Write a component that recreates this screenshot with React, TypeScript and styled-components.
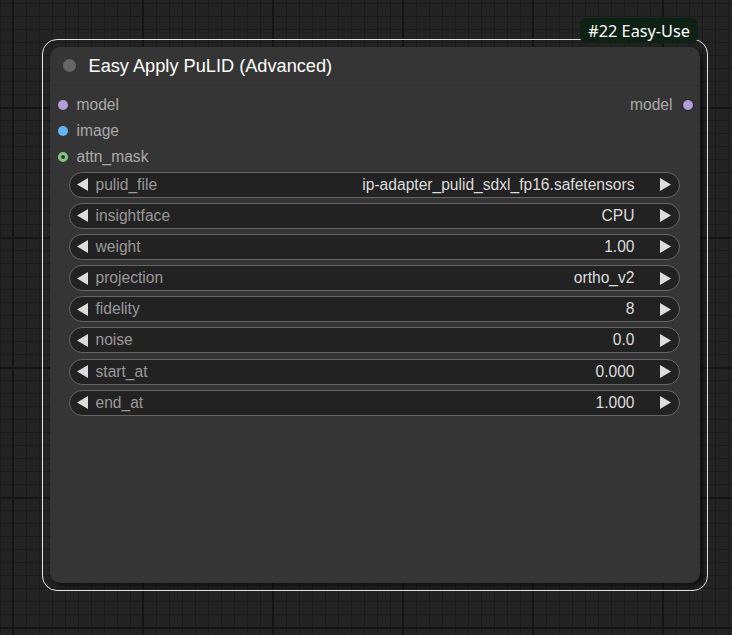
import React from 'react';
import styled, { createGlobalStyle } from 'styled-components';

const GlobalStyle = createGlobalStyle`
  html, body {
    margin: 0;
    padding: 0;
    background: #232323;
  }
`;

const Canvas = styled.div`
  width: 732px;
  height: 635px;
  box-sizing: border-box;
  padding: 39px 0 0 42px;
  overflow: hidden;
  background-color: #232323;
  background-image:
    linear-gradient(to right, #151515 0 2px, transparent 2px),
    linear-gradient(to bottom, #151515 0 2px, transparent 2px),
    linear-gradient(to right, #1b1b1b 0 1px, transparent 1px),
    linear-gradient(to bottom, #1b1b1b 0 1px, transparent 1px);
  background-size: 130px 130px, 130px 130px, 13px 13px, 13px 13px;
  background-position: 12px 0, 0 107px, 0 0, 0 3px;
  font-family: 'Liberation Sans', Arial, sans-serif;
`;

const Selection = styled.div`
  position: relative;
  width: 666px;
  height: 552px;
  box-sizing: border-box;
  border: 1.5px solid #e4e4e4;
  border-radius: 15px;
  padding: 6.5px;
`;

const Badge = styled.div`
  position: absolute;
  top: -22px;
  right: 9px;
  height: 25px;
  padding: 0 8px;
  display: flex;
  align-items: center;
  background: #0d2114;
  border-radius: 6px;
  color: #ffffff;
  font-family: 'Noto Sans', 'Open Sans', sans-serif;
  font-size: 16.3px;
`;

const Node = styled.div`
  width: 650px;
  height: 536px;
  box-sizing: border-box;
  background: #353535;
  border-radius: 10px;
  box-shadow: 3px 3px 5px rgba(0, 0, 0, 0.55);
  display: flex;
  flex-direction: column;
`;

const TitleBar = styled.div`
  height: 39px;
  box-sizing: border-box;
  display: flex;
  align-items: center;
  gap: 13px;
  padding: 2px 0 0 13px;
  border-bottom: 1px solid #2e2e2e;
`;

const TitleDot = styled.span`
  width: 13px;
  height: 13px;
  margin-top: -2px;
  border-radius: 50%;
  background: #666666;
`;

const Title = styled.span`
  color: #ffffff;
  font-size: 18.2px;
`;

const Body = styled.div`
  padding-top: 6px;
  display: flex;
  flex-direction: column;
`;

const SlotRow = styled.div`
  height: 26px;
  display: flex;
  align-items: center;
  justify-content: space-between;
`;

const Slot = styled.div<{ $out?: boolean }>`
  display: flex;
  align-items: center;
  gap: 9px;
  flex-direction: ${(p) => (p.$out ? 'row-reverse' : 'row')};
  padding: ${(p) => (p.$out ? '0 6px 0 0' : '0 0 0 8px')};
  color: #aaaaaa;
  font-size: 15.6px;
`;

const SlotDot = styled.span<{ $color: string; $ring?: boolean; $edge?: boolean }>`
  width: ${(p) => (p.$edge ? '12px' : '10px')};
  height: ${(p) => (p.$edge ? '12px' : '10px')};
  box-sizing: border-box;
  border-radius: 50%;
  background: ${(p) => (p.$ring ? '#353535' : p.$color)};
  border: ${(p) =>
    p.$ring ? `3px solid ${p.$color}` : p.$edge ? '1.5px solid #1c1c1c' : 'none'};
`;

const Widgets = styled.div`
  margin-top: 2px;
  padding: 0 20px 0 19px;
  display: flex;
  flex-direction: column;
  gap: 5.2px;
`;

const Widget = styled.div`
  height: 26px;
  box-sizing: border-box;
  display: flex;
  align-items: center;
  background: #222222;
  border: 1px solid #666666;
  border-radius: 13px;
  padding: 0 8px 0 7px;
  font-size: 15.6px;
`;

const Label = styled.span`
  flex: 1;
  margin-left: 8px;
  color: #999999;
`;

const Value = styled.span`
  margin-right: 25px;
  color: #dddddd;
`;

const Arrow = ({ dir }: { dir: 'left' | 'right' }) => (
  <svg width="11" height="13" viewBox="0 0 11 13">
    <polygon
      points={dir === 'left' ? '11,0 11,13 0,6.5' : '0,0 0,13 11,6.5'}
      fill="#dddddd"
    />
  </svg>
);

const widgets = [
  ['pulid_file', 'ip-adapter_pulid_sdxl_fp16.safetensors'],
  ['insightface', 'CPU'],
  ['weight', '1.00'],
  ['projection', 'ortho_v2'],
  ['fidelity', '8'],
  ['noise', '0.0'],
  ['start_at', '0.000'],
  ['end_at', '1.000'],
];

const App = () => {
  return (
    <>
      <GlobalStyle />
      <Canvas>
        <Selection>
          <Badge>#22 Easy-Use</Badge>
          <Node>
            <TitleBar>
              <TitleDot />
              <Title>Easy Apply PuLID (Advanced)</Title>
            </TitleBar>
            <Body>
              <SlotRow>
                <Slot>
                  <SlotDot $color="#b39ddb" />
                  model
                </Slot>
                <Slot $out>
                  <SlotDot $color="#b39ddb" $edge />
                  model
                </Slot>
              </SlotRow>
              <SlotRow>
                <Slot>
                  <SlotDot $color="#64b5f6" />
                  image
                </Slot>
              </SlotRow>
              <SlotRow>
                <Slot>
                  <SlotDot $color="#81c784" $ring />
                  attn_mask
                </Slot>
              </SlotRow>
              <Widgets>
                {widgets.map(([name, value]) => (
                  <Widget key={name}>
                    <Arrow dir="left" />
                    <Label>{name}</Label>
                    <Value>{value}</Value>
                    <Arrow dir="right" />
                  </Widget>
                ))}
              </Widgets>
            </Body>
          </Node>
        </Selection>
      </Canvas>
    </>
  );
};

export default App;
